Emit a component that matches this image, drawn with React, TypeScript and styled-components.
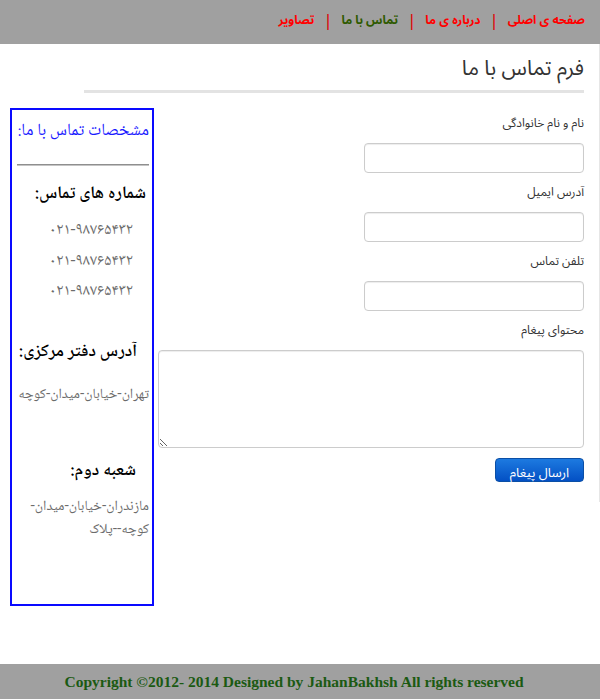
import React from "react";
import styled, { createGlobalStyle } from "styled-components";

const Global = createGlobalStyle`
  html, body { margin: 0; padding: 0; background: #fff; }
  body { font-family: "DejaVu Sans", sans-serif; }
  #root { width: 600px; }
`;

const sans = `"Noto Sans Arabic", "DejaVu Sans", sans-serif`;
const naskh = `"Noto Naskh Arabic", "Noto Sans Arabic", "DejaVu Sans", serif`;

const Header = styled.header`
  height: 44px;
  background: #a0a0a0;
  display: flex;
  direction: rtl;
  align-items: center;
  padding: 0 15px 3px 0;
  box-sizing: border-box;
`;

const NavLink = styled.a<{ $active?: boolean }>`
  font: bold 12px ${sans};
  color: ${(p) => (p.$active ? "#2f5a00" : "#ff0000")};
  text-decoration: none;
`;

const Sep = styled.span`
  color: #e00000;
  font: 15px "DejaVu Sans", sans-serif;
  margin: 0 11px;
`;

const Content = styled.main`
  direction: rtl;
  width: 600px;
  box-sizing: border-box;
  border-right: 1px solid #e6e6e6;
  padding: 0 15px 20px 0;
`;

const Title = styled.h2`
  width: 500px;
  margin: 0;
  padding: 6px 0 4px;
  font: normal 21px/36px ${sans};
  color: #333;
  border-bottom: 3px solid #e3e3e3;
`;

const Sidebar = styled.aside`
  float: left;
  width: 144px;
  height: 498px;
  margin: 15px 0 58px 10px;
  box-sizing: border-box;
  border: 2px solid #0a0aff;
  padding: 0 3px;
  text-align: right;
`;

const SideTitle = styled.h3`
  margin: 10px 0 0;
  font: normal 17px/24px ${naskh};
  color: #1a1aff;
  white-space: nowrap;
`;

const Rule = styled.hr`
  margin: 20px 0 0 2px;
  border: 0;
  border-top: 1px solid #8f8f8f;
  height: 1px;
  background: #c4c4c4;
`;

const SideHeading = styled.h4<{ $indent: number; $top: number }>`
  margin: ${(p) => p.$top}px ${(p) => p.$indent}px 0 0;
  font: 600 17.5px/24px ${naskh};
  color: #000;
  white-space: nowrap;
`;

const PhoneList = styled.ul`
  list-style: none;
  margin: 10px 16px 0 0;
  padding: 0;
`;

const Phone = styled.li`
  font: 16px/30.5px ${naskh};
  color: #6b6b6b;
`;

const SideText = styled.p<{ $top: number }>`
  margin: ${(p) => p.$top}px 0 0;
  font: 14px/23px ${naskh};
  color: #6b6b6b;
  white-space: nowrap;
`;

const Form = styled.form`
  margin-top: 22px;
`;

const Label = styled.label`
  display: block;
  font: 12px/18px ${sans};
  color: #333;
  margin-bottom: 10px;
`;

const Input = styled.input`
  display: block;
  width: 220px;
  height: 30px;
  box-sizing: border-box;
  border: 1px solid #ccc;
  border-radius: 4px;
  margin: 0 0 11px;
  padding: 4px 6px;
  background: #fff;
  box-shadow: inset 0 1px 1px rgba(0, 0, 0, 0.075);
  font: 12px ${sans};
`;

const TextArea = styled.textarea`
  display: block;
  width: 426px;
  height: 98px;
  box-sizing: border-box;
  border: 1px solid #ccc;
  border-radius: 4px;
  margin: 0 0 10px;
  padding: 4px 6px;
  box-shadow: inset 0 1px 1px rgba(0, 0, 0, 0.075);
  font: 12px ${sans};
  resize: vertical;
`;

const Button = styled.button`
  display: block;
  width: 89px;
  height: 24px;
  box-sizing: border-box;
  border: 1px solid #0b4fa6;
  border-radius: 4px;
  background: linear-gradient(#1d7ae0, #0350c4);
  color: #fff;
  font: 13px ${sans};
  padding: 0;
  cursor: pointer;
`;

const Footer = styled.footer`
  clear: both;
  height: 35px;
  background: #a0a0a0;
  text-align: center;
  padding-right: 12px;
  font: bold 15.5px/35px "Liberation Serif", serif;
  color: #1b5a12;
`;

const navItems = [
  { label: "صفحه ی اصلی" },
  { label: "درباره ی ما" },
  { label: "تماس با ما", active: true },
  { label: "تصاویر" },
];

const phones = ["۰۲۱-۹۸۷۶۵۴۳۲", "۰۲۱-۹۸۷۶۵۴۳۲", "۰۲۱-۹۸۷۶۵۴۳۲"];

export default function App() {
  return (
    <>
      <Global />
      <Header>
        {navItems.map((item, i) => (
          <React.Fragment key={item.label}>
            {i > 0 && <Sep>|</Sep>}
            <NavLink href="#" $active={item.active}>
              {item.label}
            </NavLink>
          </React.Fragment>
        ))}
      </Header>
      <Content>
        <Title>فرم تماس با ما</Title>
        <Sidebar>
          <SideTitle>مشخصات تماس با ما:</SideTitle>
          <Rule />
          <SideHeading $indent={3} $top={16}>
            شماره های تماس:
          </SideHeading>
          <PhoneList>
            {phones.map((p, i) => (
              <Phone key={i}>{p}</Phone>
            ))}
          </PhoneList>
          <SideHeading $indent={12} $top={32}>
            آدرس دفتر مرکزی:
          </SideHeading>
          <SideText $top={20}>تهران-خیابان-میدان-کوچه</SideText>
          <SideHeading $indent={13} $top={52}>
            شعبه دوم:
          </SideHeading>
          <SideText $top={13}>
            مازندران-خیابان-میدان-
            <br />
            کوچه--پلاک
          </SideText>
        </Sidebar>
        <Form onSubmit={(e) => e.preventDefault()}>
          <Label htmlFor="name">نام و نام خانوادگی</Label>
          <Input id="name" type="text" />
          <Label htmlFor="email">آدرس ایمیل</Label>
          <Input id="email" type="email" />
          <Label htmlFor="phone">تلفن تماس</Label>
          <Input id="phone" type="text" />
          <Label htmlFor="msg">محتوای پیغام</Label>
          <TextArea id="msg" />
          <Button type="submit">ارسال پیغام</Button>
        </Form>
      </Content>
      <Footer>Copyright ©2012- 2014 Designed by JahanBakhsh All rights reserved</Footer>
    </>
  );
}
